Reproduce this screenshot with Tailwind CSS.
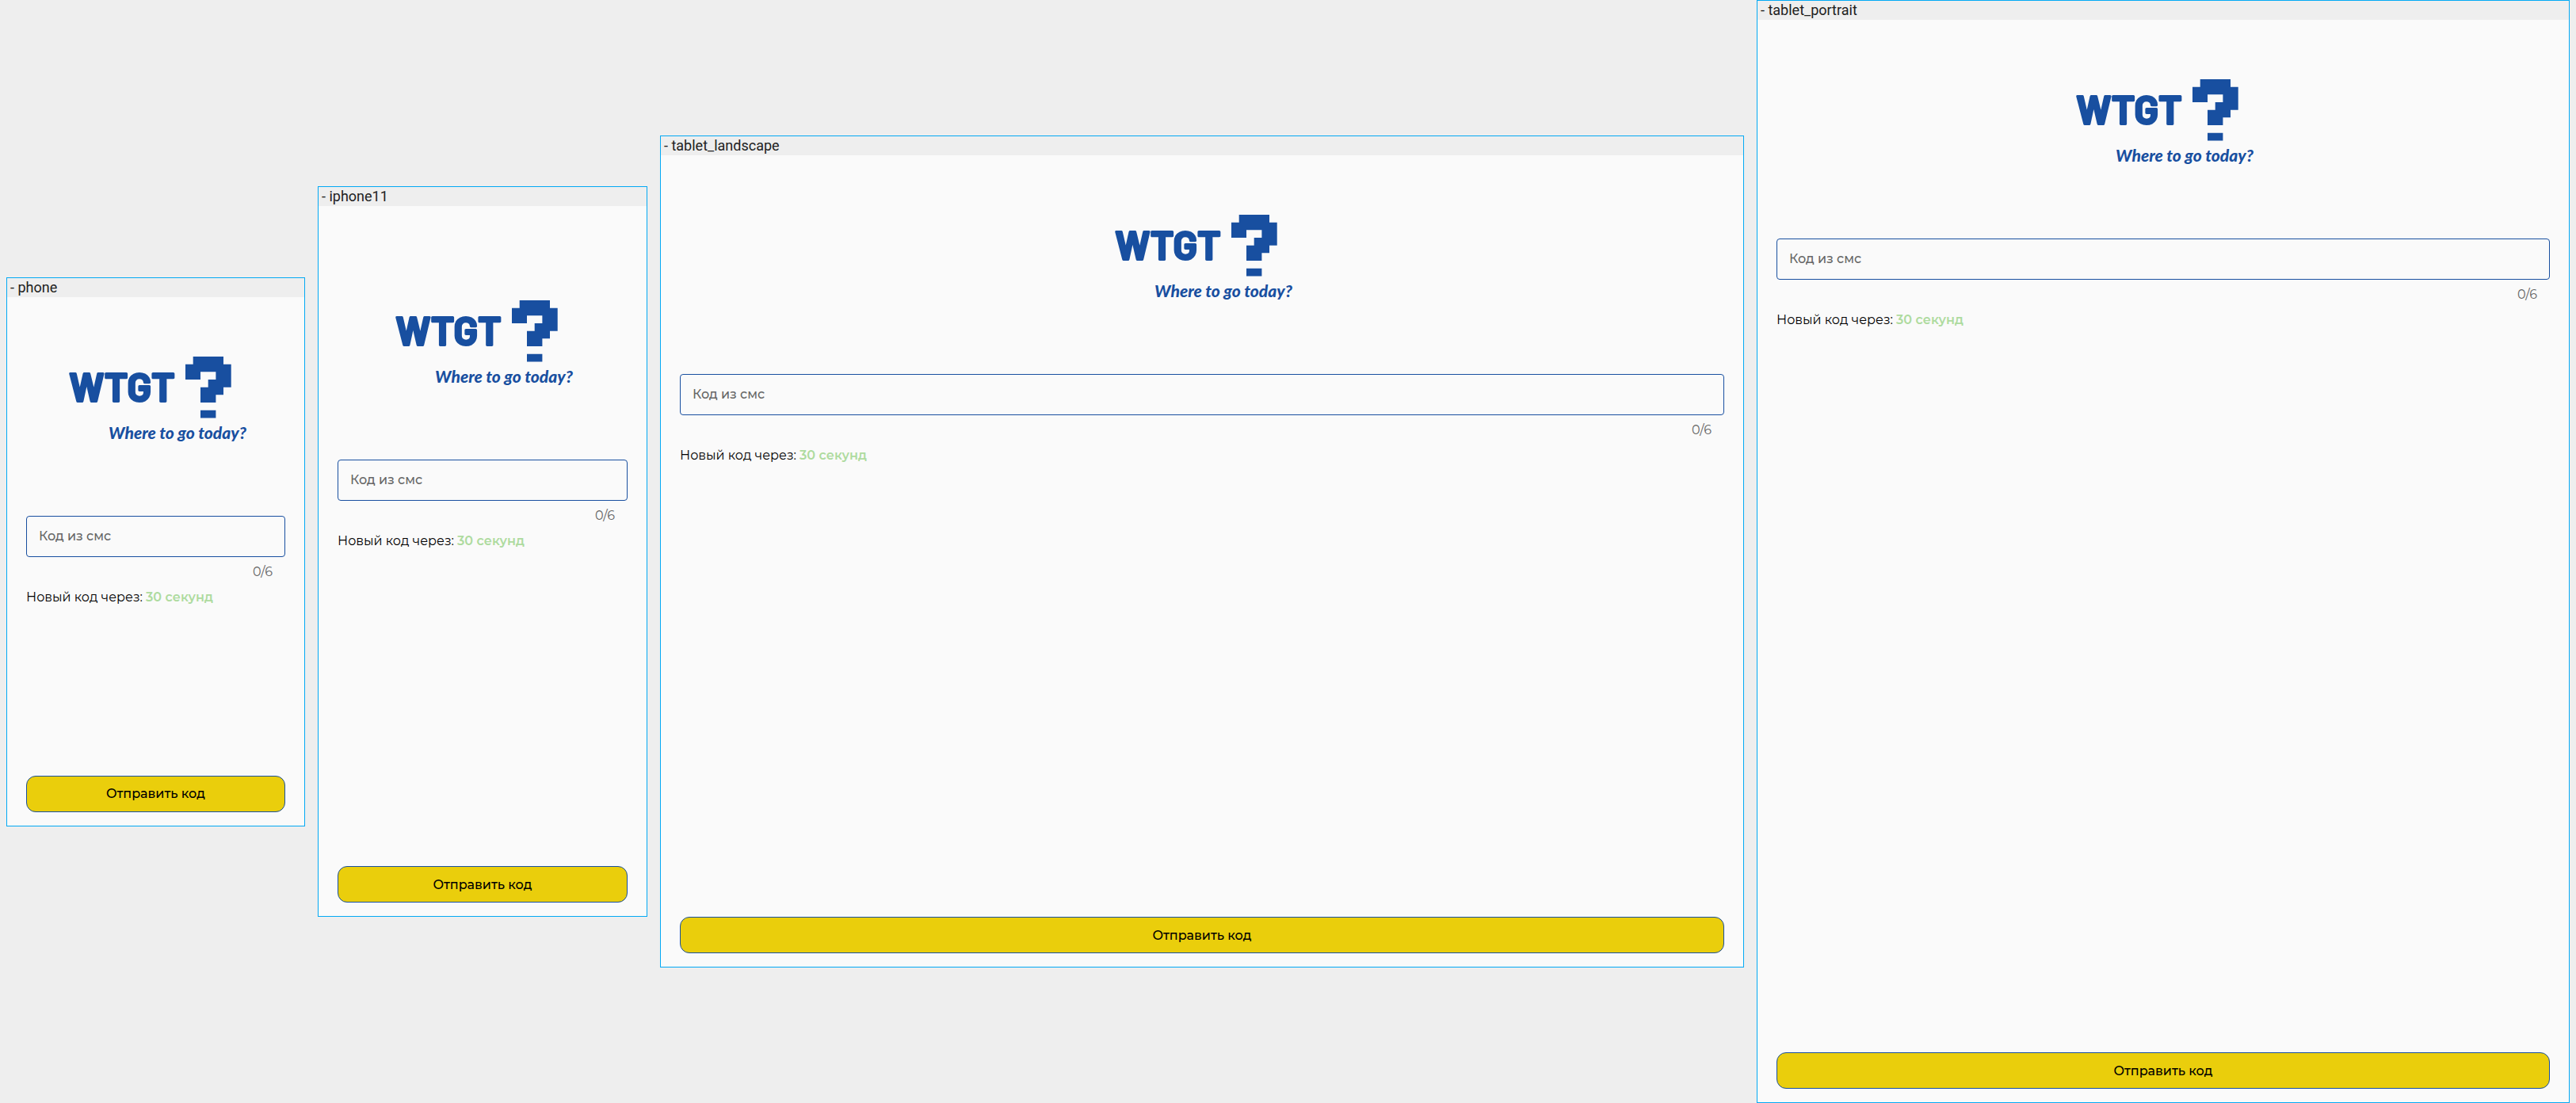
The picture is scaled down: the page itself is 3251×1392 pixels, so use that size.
<!DOCTYPE html>
<html lang="ru">
<head>
<meta charset="utf-8">
<meta name="viewport" content="width=device-width, initial-scale=1">
<title>WTGT</title>
<script src="https://cdn.jsdelivr.net/npm/@tailwindcss/browser@4"></script>
</head>
<body class="bg-[#eeeeee]">
<main class="grid min-h-screen grid-cols-[minmax(0,377fr)_minmax(0,416fr)_minmax(0,1368fr)_minmax(0,1026fr)] items-center gap-4 px-2 font-[Montserrat,Inter,sans-serif] text-base leading-6 text-black">

  <section class="flex aspect-[377/693] flex-col border border-[#03a9f4] bg-[#fafafa]">
    <h2 class="h-6 bg-[#eeeeee] px-1 font-[Roboto,sans-serif] text-lg leading-6 text-[#212121]">- phone</h2>
    <form class="flex flex-1 flex-col px-6 pt-[75px] pb-[17px]">
      <svg class="mx-auto h-[120px] w-[240px] shrink-0" viewBox="-8 0 240 120" fill="#184fa0" role="img" aria-label="WTGT">
        <text x="2" y="57" font-family="Barlow, 'Roboto Condensed', sans-serif" font-size="51" font-weight="700" stroke="#184fa0" stroke-width="2" stroke-linejoin="round">WTGT</text>
        <path d="M158.7 0H197v9.7h9.7v29H197v9.6h-9.6V58H168V38.7h9.7V29h9.7v-9.7H168V29h-19V9.7h9.7zM168 67.7h19.4v9.7H168z"/>
        <text x="52" y="104" font-family="Lato, sans-serif" font-size="21" font-weight="900" font-style="italic">Where to go today?</text>
      </svg>
      <div class="mt-[81px] flex h-13 items-center gap-2 rounded border border-[#184fa0] px-[15px]">
        <label for="code-phone" class="font-medium whitespace-nowrap text-[#666]">Код из смс</label>
        <input id="code-phone" type="text" maxlength="6" inputmode="numeric" class="min-w-0 flex-1 outline-none">
      </div>
      <p class="mt-[7px] px-4 text-right text-[#666]">0/6</p>
      <p class="mt-2">Новый код через: <span class="font-semibold text-[#aedb9f]">30 секунд</span></p>
      <button type="submit" class="mt-auto h-[46px] rounded-xl border border-[#184fa0] bg-[#eace0c] pt-px font-medium">Отправить код</button>
    </form>
  </section>

  <section class="flex aspect-[416/922] flex-col border border-[#03a9f4] bg-[#fafafa]">
    <h2 class="h-6 bg-[#eeeeee] px-1 font-[Roboto,sans-serif] text-lg leading-6 text-[#212121]">- iphone11</h2>
    <form class="flex flex-1 flex-col px-6 pt-[119px] pb-[17px]">
      <svg class="mx-auto h-[120px] w-[240px] shrink-0" viewBox="-8 0 240 120" fill="#184fa0" role="img" aria-label="WTGT">
        <text x="2" y="57" font-family="Barlow, 'Roboto Condensed', sans-serif" font-size="51" font-weight="700" stroke="#184fa0" stroke-width="2" stroke-linejoin="round">WTGT</text>
        <path d="M158.7 0H197v9.7h9.7v29H197v9.6h-9.6V58H168V38.7h9.7V29h9.7v-9.7H168V29h-19V9.7h9.7zM168 67.7h19.4v9.7H168z"/>
        <text x="52" y="104" font-family="Lato, sans-serif" font-size="21" font-weight="900" font-style="italic">Where to go today?</text>
      </svg>
      <div class="mt-[81px] flex h-13 items-center gap-2 rounded border border-[#184fa0] px-[15px]">
        <label for="code-iphone11" class="font-medium whitespace-nowrap text-[#666]">Код из смс</label>
        <input id="code-iphone11" type="text" maxlength="6" inputmode="numeric" class="min-w-0 flex-1 outline-none">
      </div>
      <p class="mt-[7px] px-4 text-right text-[#666]">0/6</p>
      <p class="mt-2">Новый код через: <span class="font-semibold text-[#aedb9f]">30 секунд</span></p>
      <button type="submit" class="mt-auto h-[46px] rounded-xl border border-[#184fa0] bg-[#eace0c] pt-px font-medium">Отправить код</button>
    </form>
  </section>

  <section class="flex aspect-[1368/1050] flex-col border border-[#03a9f4] bg-[#fafafa]">
    <h2 class="h-6 bg-[#eeeeee] px-1 font-[Roboto,sans-serif] text-lg leading-6 text-[#212121]">- tablet_landscape</h2>
    <form class="flex flex-1 flex-col px-6 pt-[75px] pb-[17px]">
      <svg class="mx-auto h-[120px] w-[240px] shrink-0" viewBox="-8 0 240 120" fill="#184fa0" role="img" aria-label="WTGT">
        <text x="2" y="57" font-family="Barlow, 'Roboto Condensed', sans-serif" font-size="51" font-weight="700" stroke="#184fa0" stroke-width="2" stroke-linejoin="round">WTGT</text>
        <path d="M158.7 0H197v9.7h9.7v29H197v9.6h-9.6V58H168V38.7h9.7V29h9.7v-9.7H168V29h-19V9.7h9.7zM168 67.7h19.4v9.7H168z"/>
        <text x="52" y="104" font-family="Lato, sans-serif" font-size="21" font-weight="900" font-style="italic">Where to go today?</text>
      </svg>
      <div class="mt-[81px] flex h-13 items-center gap-2 rounded border border-[#184fa0] px-[15px]">
        <label for="code-landscape" class="font-medium whitespace-nowrap text-[#666]">Код из смс</label>
        <input id="code-landscape" type="text" maxlength="6" inputmode="numeric" class="min-w-0 flex-1 outline-none">
      </div>
      <p class="mt-[7px] px-4 text-right text-[#666]">0/6</p>
      <p class="mt-2">Новый код через: <span class="font-semibold text-[#aedb9f]">30 секунд</span></p>
      <button type="submit" class="mt-auto h-[46px] rounded-xl border border-[#184fa0] bg-[#eace0c] pt-px font-medium">Отправить код</button>
    </form>
  </section>

  <section class="flex aspect-[1026/1392] flex-col border border-[#03a9f4] bg-[#fafafa]">
    <h2 class="h-6 bg-[#eeeeee] px-1 font-[Roboto,sans-serif] text-lg leading-6 text-[#212121]">- tablet_portrait</h2>
    <form class="flex flex-1 flex-col px-6 pt-[75px] pb-[17px]">
      <svg class="mx-auto h-[120px] w-[240px] shrink-0" viewBox="-8 0 240 120" fill="#184fa0" role="img" aria-label="WTGT">
        <text x="2" y="57" font-family="Barlow, 'Roboto Condensed', sans-serif" font-size="51" font-weight="700" stroke="#184fa0" stroke-width="2" stroke-linejoin="round">WTGT</text>
        <path d="M158.7 0H197v9.7h9.7v29H197v9.6h-9.6V58H168V38.7h9.7V29h9.7v-9.7H168V29h-19V9.7h9.7zM168 67.7h19.4v9.7H168z"/>
        <text x="52" y="104" font-family="Lato, sans-serif" font-size="21" font-weight="900" font-style="italic">Where to go today?</text>
      </svg>
      <div class="mt-[81px] flex h-13 items-center gap-2 rounded border border-[#184fa0] px-[15px]">
        <label for="code-portrait" class="font-medium whitespace-nowrap text-[#666]">Код из смс</label>
        <input id="code-portrait" type="text" maxlength="6" inputmode="numeric" class="min-w-0 flex-1 outline-none">
      </div>
      <p class="mt-[7px] px-4 text-right text-[#666]">0/6</p>
      <p class="mt-2">Новый код через: <span class="font-semibold text-[#aedb9f]">30 секунд</span></p>
      <button type="submit" class="mt-auto h-[46px] rounded-xl border border-[#184fa0] bg-[#eace0c] pt-px font-medium">Отправить код</button>
    </form>
  </section>

</main>
</body>
</html>
